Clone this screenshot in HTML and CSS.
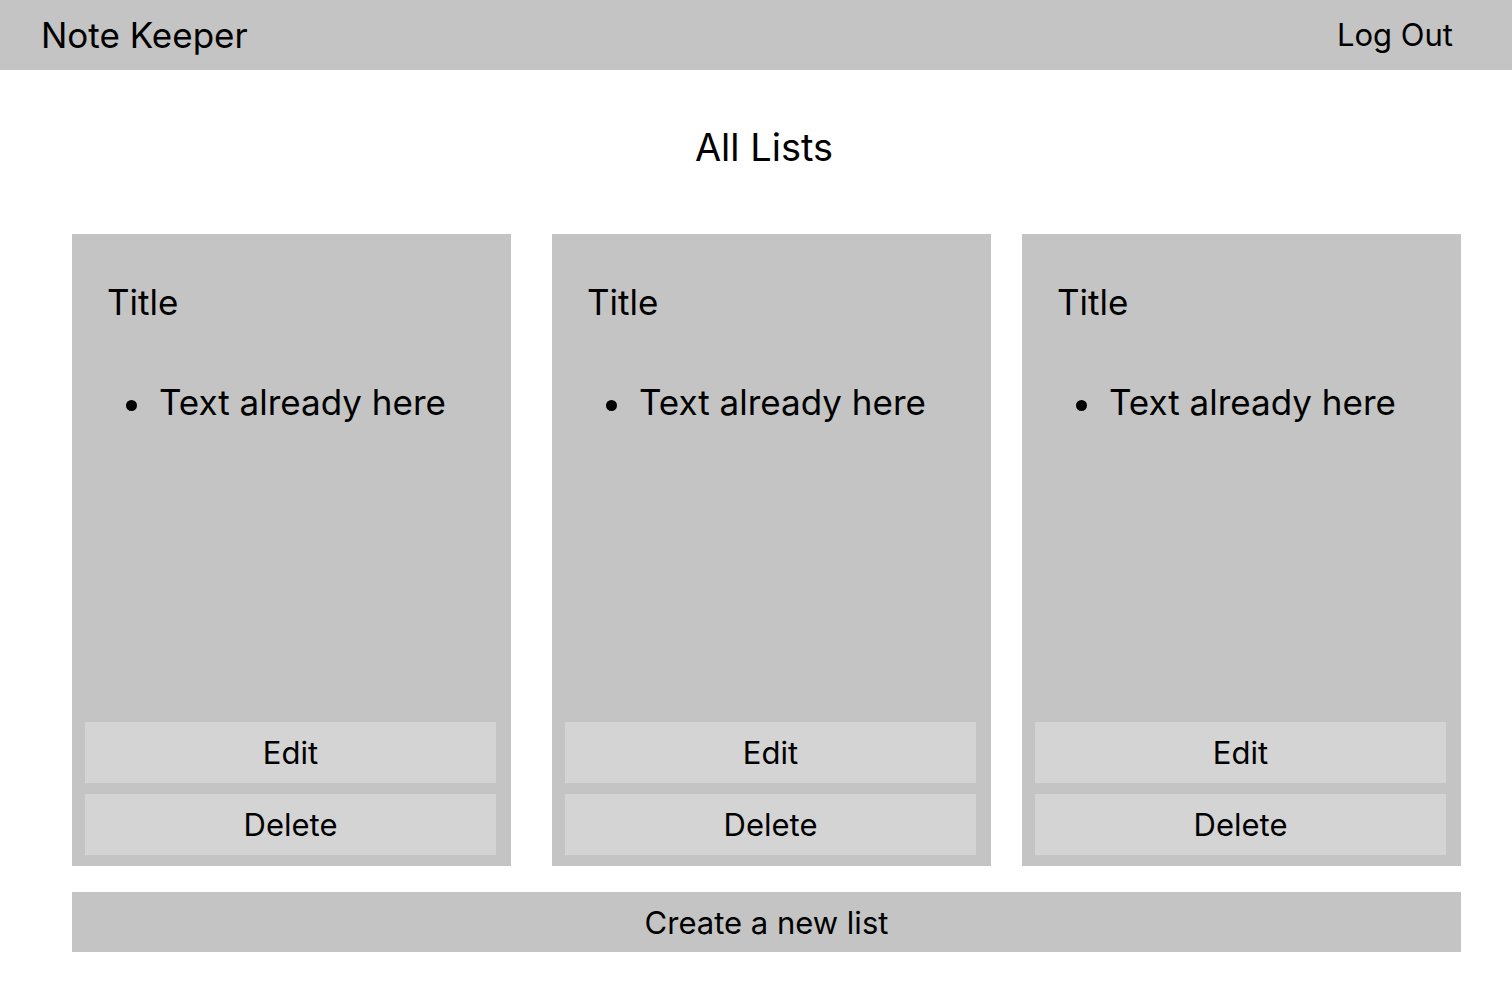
FILE: index.html
```html
<!DOCTYPE html>
<html lang="en">
<head>
<meta charset="utf-8">
<title>Note Keeper</title>
<link rel="stylesheet" href="styles.css">
</head>
<body>
<header class="topbar">
  <div class="brand">Note Keeper</div>
  <a class="logout" href="#">Log Out</a>
</header>
<main class="page">
  <h1 class="page-title">All Lists</h1>
  <section class="cards">
    <article class="card">
      <h2 class="card-title">Title</h2>
      <ul class="card-items"><li>Text already here</li></ul>
      <div class="card-actions">
        <button class="btn">Edit</button>
        <button class="btn">Delete</button>
      </div>
    </article>
    <article class="card">
      <h2 class="card-title">Title</h2>
      <ul class="card-items"><li>Text already here</li></ul>
      <div class="card-actions">
        <button class="btn">Edit</button>
        <button class="btn">Delete</button>
      </div>
    </article>
    <article class="card">
      <h2 class="card-title">Title</h2>
      <ul class="card-items"><li>Text already here</li></ul>
      <div class="card-actions">
        <button class="btn">Edit</button>
        <button class="btn">Delete</button>
      </div>
    </article>
  </section>
  <button class="create">Create a new list</button>
</main>
</body>
</html>
```

FILE: styles.css
```css
* { box-sizing: border-box; }
html, body { margin: 0; padding: 0; }
body {
  font-family: Inter, "Noto Sans", sans-serif;
  color: #000;
  background: #fff;
}
.topbar {
  height: 70px;
  background: #c4c4c4;
  display: flex;
  justify-content: space-between;
  align-items: flex-start;
  padding: 14px 59px 0 41px;
}
.brand { font-size: 35px; line-height: 42px; }
.logout {
  margin-top: 2px;
  font-size: 31px;
  line-height: 38px;
  color: #000;
  text-decoration: none;
}
.page { width: 1389px; margin: 0 0 0 72px; }
.page-title {
  margin: 54px 0 0;
  font-size: 38px;
  line-height: 46px;
  font-weight: 400;
  text-align: center;
  padding-right: 5px;
}
.cards { display: flex; margin-top: 64px; }
.card {
  width: 439px;
  height: 632px;
  background: #c4c4c4;
  display: flex;
  flex-direction: column;
  padding: 47px 15px 11px 13px;
}
.card:nth-child(2) { margin-left: 41px; }
.card:nth-child(3) { margin-left: 31px; }
.card-title {
  margin: 0 0 0 22px;
  font-size: 35px;
  line-height: 42px;
  font-weight: 400;
}
.card-items {
  margin: 58px 0 0;
  padding-left: 41px;
  list-style: none;
  font-size: 35px;
  line-height: 42px;
}
.card-items li {
  display: flex;
  align-items: flex-start;
}
.card-items li::before {
  content: "";
  flex: none;
  width: 11px;
  height: 11px;
  margin: 19px 22px 0 0;
  border-radius: 50%;
  background: #000;
}
.card-actions {
  margin-top: auto;
  display: flex;
  flex-direction: column;
  gap: 11px;
}
.btn, .create {
  font-family: Inter, "Noto Sans", sans-serif;
  font-size: 31px;
  color: #000;
  border: 0;
  padding: 0;
  cursor: pointer;
}
.btn {
  height: 61px;
  width: 100%;
  background: #d4d4d4;
}
.create {
  display: block;
  margin-top: 26px;
  width: 100%;
  height: 60px;
  background: #c4c4c4;
}
```
